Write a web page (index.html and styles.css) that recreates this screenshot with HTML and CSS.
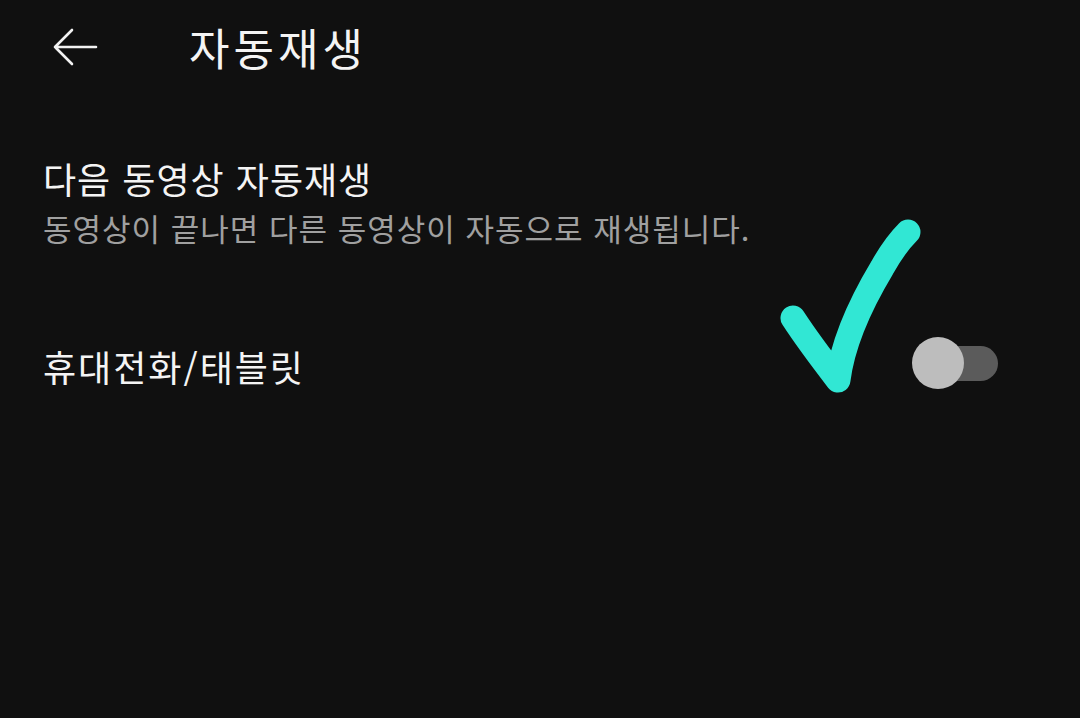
FILE: index.html
```html
<!DOCTYPE html>
<html lang="ko">
<head>
<meta charset="UTF-8" />
<meta name="viewport" content="width=device-width, initial-scale=1" />
<title>자동재생</title>
<link rel="stylesheet" href="styles.css">
</head>
<body>

<div class="screen">
    <div class="header">
        <svg class="back" width="48" height="40" viewBox="0 0 48 40">
            <path d="M45 20 H4 M21 3 L4 20 L21 37" fill="none" stroke="#f2f2f2" stroke-width="2.6" stroke-linecap="round" stroke-linejoin="round"/>
        </svg>
        <h1 class="title">자동재생</h1>
    </div>

    <div class="item">
        <div class="item-title">다음 동영상 자동재생</div>
        <div class="item-sub">동영상이 끝나면 다른 동영상이 자동으로 재생됩니다.</div>
    </div>

    <div class="item row">
        <div class="item-title">휴대전화/태블릿</div>
        <div class="switch"><span class="knob"></span></div>
    </div>

    <!-- hand drawn check mark over the list -->
    <svg class="check" width="200" height="220" viewBox="0 0 200 220">
        <path d="M27 120 C40 140 55 160 72 182 C76 150 92 110 116 70 C126 52 134 42 142 34" fill="none" stroke="#31e7d4" stroke-width="25" stroke-linecap="round" stroke-linejoin="round"/>
    </svg>
</div>

</body>
</html>
```

FILE: styles.css
```css
body {
    margin: 0;
    background: #101010;
    font-family: "Noto Sans CJK KR", "Noto Sans", sans-serif;
    color: #f4f4f4;
}
.screen {
    position: relative;
    width: 1080px;
    height: 718px;
    overflow: hidden;
}
.header {
    display: flex;
    align-items: center;
    gap: 90px;
    padding: 24px 0 0 51px;
    height: 46px;
}
.back {
    flex: none;
}
.title {
    margin: 0;
    font-size: 44px;
    font-weight: 400;
    letter-spacing: 4px;
    line-height: 46px;
}
.item {
    padding: 0 82px 0 43px;
}
.item:nth-of-type(2) {
    margin-top: 86px;
}
.item-title {
    font-size: 36px;
    line-height: 44px;
    letter-spacing: 1px;
}
.item-sub {
    margin-top: 9px;
    font-size: 31px;
    line-height: 38px;
    color: #a0a0a0;
    letter-spacing: 1px;
}
.row {
    display: flex;
    align-items: center;
    justify-content: space-between;
    margin-top: 90px;
}
.row .item-title {
    letter-spacing: 2px;
    padding-top: 6px;
}
.switch {
    position: relative;
    width: 86px;
    height: 52px;
}
.switch::before {
    content: "";
    position: absolute;
    left: 22px;
    right: 0;
    top: 9px;
    height: 35px;
    border-radius: 18px;
    background: #5b5b5b;
}
.knob {
    position: absolute;
    left: 0;
    top: 0;
    width: 52px;
    height: 52px;
    border-radius: 50%;
    background: #bdbdbd;
}
.check {
    position: absolute;
    left: 766px;
    top: 198px;
}
```
